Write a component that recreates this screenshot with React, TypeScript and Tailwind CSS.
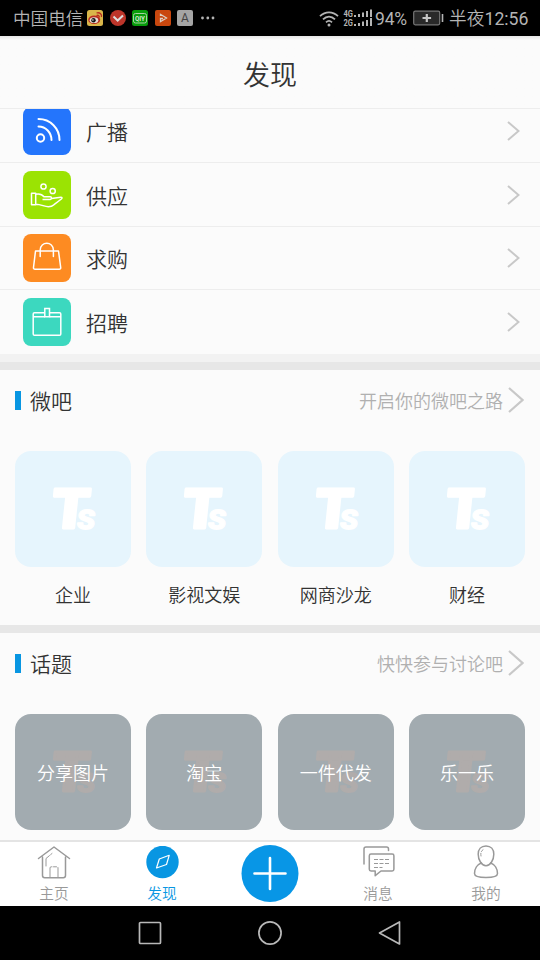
import React from 'react';

const menuItems = [
  { label: '广播', color: 'bg-[#2475fc]', icon: <BroadcastIcon /> },
  { label: '供应', color: 'bg-[#9be303]', icon: <SupplyIcon /> },
  { label: '求购', color: 'bg-[#fd8b22]', icon: <BagIcon /> },
  { label: '招聘', color: 'bg-[#3cd8bf]', icon: <JobIcon /> },
];

const groups = ['企业', '影视文娱', '网商沙龙', '财经'];
const topics = ['分享图片', '淘宝', '一件代发', '乐一乐'];

function BroadcastIcon() {
  return (
    <svg className="size-12" viewBox="0 0 48 48" fill="none" stroke="white" strokeWidth="2">
      <circle cx="17.5" cy="31" r="3.7" />
      <path d="M15.500 19.500c7.300 0 13 6 13 13.500M15.500 12c12 0 21 9.500 21 21" strokeLinecap="round" />
    </svg>
  );
}

function SupplyIcon() {
  return (
    <svg className="size-12" viewBox="0 0 48 48" fill="none" stroke="white" strokeWidth="1.5" strokeLinejoin="round">
      <circle cx="20.500" cy="15.500" r="2.600" />
      <circle cx="29.700" cy="20" r="2.600" />
      <path d="M8.500 22.200h4.200v11.600H8.500zM12.700 23.300c4-.9 6.500.2 8.300 2.500h6.200c1.700.1 1.700 2.400 0 2.700h-7.700M28.500 27.500l9.300-1.300c1.400 0 1.600 1 .6 1.800l-7.400 5.700c-1.500 1.400-3.400 2-5.600 2-4.200 0-6.900-2.400-12.700-2.500" />
    </svg>
  );
}

function BagIcon() {
  return (
    <svg className="size-12" viewBox="0 0 48 48" fill="none" stroke="white" strokeWidth="1.5" strokeLinejoin="round" strokeLinecap="round">
      <path d="M12.500 17h23l2.200 16.500c.1 1.200-.5 1.800-1.500 1.800H12c-1 0-1.600-.6-1.500-1.800zM17.200 22.500V16c0-9 13.200-9 13.200 0v6.500" />
    </svg>
  );
}

function JobIcon() {
  return (
    <svg className="size-12" viewBox="0 0 48 48" fill="none" stroke="white" strokeWidth="1.500">
      <path d="M21.800 14.700H11.500a1.300 1.300 0 0 0-1.300 1.300v20a1.300 1.300 0 0 0 1.300 1.300h25a1.300 1.300 0 0 0 1.300-1.300V16a1.300 1.300 0 0 0-1.300-1.300H26.500M10.500 18.700h11.300M26.500 18.700h11.300" />
      <path d="M21.800 10.500h4.700v8.200h-4.700z" />
    </svg>
  );
}

function TsLogo({ className }: { className: string }) {
  return (
    <svg className={className} viewBox="0 0 116 116" fontFamily="Roboto, 'Liberation Sans', sans-serif" fontWeight="900" strokeLinejoin="round">
      <text transform="translate(41 77.500) skewX(-6) scale(1.080 1)" fontSize="55">
        <tspan x="-5.500" strokeWidth="2.800">T</tspan>
        <tspan x="18.700" y=".5" fontSize="27" strokeWidth="1.300">S</tspan>
      </text>
    </svg>
  );
}

function StatusBar() {
  return (
    <div className="h-9 bg-black text-[#b4b4b4] flex items-center pl-[13px] pr-[11.500px] text-[18px] leading-9">
      <span className="text-[17.600px] pt-[2px]">中国电信</span>
      <div className="flex items-center gap-[6.500px] ml-1">
        <svg className="size-4" viewBox="0 0 16 16">
          <rect width="16" height="16" rx="2.500" fill="#d9b64a" />
          <ellipse cx="7.200" cy="9.800" rx="6" ry="4.300" fill="#b92a20" />
          <ellipse cx="7" cy="10.200" rx="4.300" ry="2.900" fill="#e6ddd2" />
          <circle cx="6.500" cy="10.300" r="2.200" fill="#151515" />
          <circle cx="5.900" cy="10" r=".7" fill="#fff" />
          <path d="M9.500 5.500c2-.8 3.200.5 2.600 2M9.500 3c3.500-1 5.700 1.500 4.900 4" fill="none" stroke="#b92a20" strokeWidth="1.300" />
        </svg>
        <svg className="size-4" viewBox="0 0 16 16">
          <circle cx="8" cy="8" r="8" fill="#bd352a" />
          <path d="M3.500 6.500 7.700 10.500 13 5.500" fill="none" stroke="#ddd" strokeWidth="2" />
        </svg>
        <svg className="size-4" viewBox="0 0 16 16">
          <rect width="16" height="16" rx="2.500" fill="#079b0b" />
          <rect x="1.500" y="3.500" width="13" height="9.500" rx="2" fill="none" stroke="#a8d0a4" strokeWidth="1" />
          <text x="8" y="11" fontSize="7.500" fontWeight="700" fill="#d5e5d2" textAnchor="middle" textLength="10" lengthAdjust="spacingAndGlyphs">QIY</text>
        </svg>
        <svg className="size-4" viewBox="0 0 16 16">
          <rect width="16" height="16" rx="2" fill="#c9470e" />
          <path d="M5.500 6V4.300L11.500 8 5.500 11.700V8.500H8" fill="none" stroke="#ddd0c5" strokeWidth="1.300" />
        </svg>
        <svg className="size-4" viewBox="0 0 16 16">
          <rect width="16" height="16" rx="2" fill="#a5a5a5" />
          <text x="8" y="12.200" fontSize="12" fontWeight="400" fill="#444" textAnchor="middle">A</text>
        </svg>
        <svg className="w-4 h-4" viewBox="0 0 16 16" fill="#b4b4b4">
          <circle cx="2.500" cy="8" r="1.400" />
          <circle cx="7.800" cy="8" r="1.400" />
          <circle cx="13" cy="8" r="1.400" />
        </svg>
      </div>
      <div className="ml-auto flex items-center">
        <svg className="w-5 h-[17px] mr-1" viewBox="0 0 20 17" fill="none" stroke="#b4b4b4" strokeWidth="1.800">
          <path d="M1 6.200c5.300-5 12.700-5 18 0M4 9.300c3.600-3.400 8.400-3.400 12 0M7 12.300c1.800-1.700 4.200-1.700 6 0" />
          <circle cx="10" cy="15" r="1.500" fill="#b4b4b4" stroke="none" />
        </svg>
        <svg className="w-[32px] h-[18px]" viewBox="0 0 32 18" fill="#b4b4b4">
          <text x=".5" y="8" fontSize="9" fontWeight="700" textLength="9.500" lengthAdjust="spacingAndGlyphs">4G</text>
          <text x=".5" y="17" fontSize="9" fontWeight="700" textLength="9.500" lengthAdjust="spacingAndGlyphs">2G</text>
          <path d="M11 6h2v2h-2zM15 5h2v3h-2zM19 3.500h2V8h-2zM23 2h2v6h-2zM27 .5h2V8h-2zM11 15h2v2h-2zM15 14h2v3h-2zM19 12.500h2V17h-2zM23 11h2v6h-2zM27 9h2v8h-2z" />
        </svg>
        <span className="w-[33px] text-[17.500px] font-normal tracking-[-0.2px] pt-[2px]">94%</span>
        <svg className="w-8 h-4 ml-[5px] mr-[4px]" viewBox="0 0 32 16">
          <rect x=".7" y="1.200" width="26" height="13.600" rx="1.500" fill="#292929" stroke="#777" strokeWidth="1.200" />
          <path d="M13.800 4v8M9.500 8h8.600" stroke="#c4c4c4" strokeWidth="2.200" />
          <path d="M29.500 4v8" stroke="#b4b4b4" strokeWidth="1.600" />
        </svg>
        <span className="text-[17.700px] pt-[2px]">半夜<span className="font-normal">12:56</span></span>
      </div>
    </div>
  );
}

function SectionHeader({ title, hint }: { title: string; hint: string }) {
  return (
    <div className="flex items-center h-[60px] pl-[15px] pr-4">
      <div className="w-1.5 h-[19px] bg-[#0896e2]" />
      <h2 className="ml-[9px] pt-[5px] text-[21px] text-[#333]">{title}</h2>
      <span className="ml-auto pt-[2px] text-[18px] text-[#b0b0b0]">{hint}</span>
      <svg className="w-4 h-[26px] ml-[5px]" viewBox="0 0 16 26" fill="none" stroke="#c8c8c8" strokeWidth="2.200">
        <path d="M1 1 14.500 13 1 25" />
      </svg>
    </div>
  );
}

function TabBar() {
  return (
    <div className="h-[66px] bg-white border-t-2 border-[#e4e4e4] grid grid-cols-5 text-[14.700px] leading-5 text-[#999]">
      <div className="flex flex-col items-center pt-1">
        <svg className="w-[34px] h-[33px]" viewBox="0 0 34 33" fill="none" stroke="#999" strokeWidth="1.500" strokeLinecap="round" strokeLinejoin="round">
          <path d="M1.500 12.500 17 1l15.500 11.500M5.500 11v18.500c0 1.500.7 2.200 2.200 2.200h18.600c1.500 0 2.200-.7 2.200-2.200V11" />
          <path d="M13 31.500V22c0-.8.400-1.200 1.200-1.200h5.600c.8 0 1.200.4 1.200 1.200v9.500M9 20v-7.500L15 7.500" strokeWidth="1" strokeDasharray="12 1.500 3 1.500" />
        </svg>
        <span className="mt-[5px]">主页</span>
      </div>
      <div className="flex flex-col items-center pt-1 text-[#0896e2]">
        <svg className="size-[33px]" viewBox="0 0 33 33" fill="none">
          <circle cx="16.500" cy="16" r="16.200" fill="#0896e2" />
          <path d="M23.200 9.300 20.500 18.500 10.500 22 13.300 13z" stroke="white" strokeWidth="1.200" strokeLinejoin="round" />
        </svg>
        <span className="mt-[5px]">发现</span>
      </div>
      <div className="flex justify-center pt-[3px]">
        <svg className="size-[58px]" viewBox="0 0 58 58">
          <circle cx="29" cy="28.500" r="28.500" fill="#0896e6" />
          <path d="M13.500 28.500h31M29 13v31" stroke="white" strokeWidth="2.600" strokeLinecap="round" />
        </svg>
      </div>
      <div className="flex flex-col items-center pt-1">
        <svg className="w-[33px] h-[33px]" viewBox="0 0 33 33" fill="none" stroke="#999" strokeWidth="1.500" strokeLinejoin="round" strokeLinecap="round">
          <path d="M2 18V3c0-1.500.5-2 2-2h20.500c1.500 0 2 .5 2 2v1.500" />
          <path d="M9 8h21.200c1.200 0 1.700.5 1.700 1.700v13.600c0 1.200-.5 1.700-1.700 1.700H19l-5.800 4.700V25H9c-1.200 0-1.700-.5-1.700-1.700V9.700C7.300 8.500 7.800 8 9 8z" />
          <path d="M12 13.500h15M12 17.500h15M12 21.500h8.500" strokeWidth="1.200" strokeDasharray="4 1.500" strokeLinecap="butt" />
        </svg>
        <span className="mt-[5px]">消息</span>
      </div>
      <div className="flex flex-col items-center pt-[3px]">
        <svg className="w-[26px] h-[34px]" viewBox="0 0 26 34" fill="none" stroke="#999" strokeWidth="1.500" strokeLinecap="round">
          <path d="M13 1C8 1 5.200 4.500 5.200 9.200c0 5.500 3.300 11.500 7.800 11.500s7.800-6 7.800-11.500C20.800 4.500 18 1 13 1z" />
          <path d="M8.300 18C4 19.500 1.500 24 1.500 28.500c0 3 4 4 11.500 4s11.500-1 11.500-4c0-4.500-2.500-9-6.800-10.500" />
          <path d="M8 11c-.7-3.500.5-6 3.500-7" strokeWidth="1" strokeDasharray="2.500 2" />
        </svg>
        <span className="mt-[5px]">我的</span>
      </div>
    </div>
  );
}

function App() {
  return (
    <div className="w-[540px] h-[960px] overflow-hidden flex flex-col bg-[#fbfbfb] font-[350] font-[Roboto,'Noto_Sans_CJK_SC',sans-serif]">
      <StatusBar />
      <header className="h-[73px] shrink-0 flex items-center justify-center border-b border-[#ededed] bg-linear-to-b from-[#e6e6e6] to-[#fbfbfb] to-[4px] pt-[9px] text-[27px] text-[#333]">
        发现
      </header>

      {/* Scrolled list, the first row is cut by the header */}
      <div className="h-[245px] shrink-0 overflow-hidden flex flex-col justify-end">
        {menuItems.map((item) => (
          <div key={item.label} className="h-[63.700px] shrink-0 flex items-center border-b border-[#ededed] last:border-transparent pl-[23px] pr-5 pt-px">
            <div className={`size-12 rounded-lg ${item.color}`}>{item.icon}</div>
            <span className="ml-[15px] pt-[5px] text-[21px] text-[#333]">{item.label}</span>
            <svg className="ml-auto w-[13px] h-5" viewBox="0 0 13 20" fill="none" stroke="#c8c8c8" strokeWidth="2">
              <path d="M1 1 11.500 10 1 19" />
            </svg>
          </div>
        ))}
      </div>
      <div className="h-2 shrink-0 bg-[#f2f2f2]" />
      <div className="h-2 shrink-0 bg-[#e7e7e7]" />

      <section className="h-[255px] shrink-0">
        <SectionHeader title="微吧" hint="开启你的微吧之路" />
        <div className="grid grid-cols-4 gap-[15.600px] px-[15px] pt-[21px]">
          {groups.map((name) => (
            <div key={name} className="flex flex-col items-center">
              <div className="w-full aspect-square rounded-2xl bg-[#e6f5fd]">
                <TsLogo className="size-full fill-white stroke-white" />
              </div>
              <span className="mt-[15.500px] text-[18px] leading-7 text-[#333]">{name}</span>
            </div>
          ))}
        </div>
      </section>
      <div className="h-2 shrink-0 bg-[#e7e7e7]" />

      <section className="h-[207px] shrink-0">
        <SectionHeader title="话题" hint="快快参与讨论吧" />
        <div className="grid grid-cols-4 gap-[15.600px] px-[15px] pt-[21px]">
          {topics.map((name) => (
            <div key={name} className="relative aspect-square rounded-2xl bg-[#a2abb0]">
              <TsLogo className="size-full fill-[#b0acab] stroke-[#b0acab]" />
              <span className="absolute inset-0 flex items-center justify-center pt-[3px] text-[18px] text-white">{name}</span>
            </div>
          ))}
        </div>
      </section>

      <TabBar />

      <div className="h-[54px] shrink-0 bg-black flex items-center justify-center gap-24">
        <svg className="size-6" viewBox="0 0 24 24" fill="none" stroke="#b8b8b8" strokeWidth="1.700">
          <rect x="1.500" y="1.500" width="21" height="21" rx="1" />
        </svg>
        <svg className="size-6" viewBox="0 0 24 24" fill="none" stroke="#b8b8b8" strokeWidth="1.700">
          <circle cx="12" cy="12" r="11.100" />
        </svg>
        <svg className="size-6" viewBox="0 0 24 24" fill="none" stroke="#b8b8b8" strokeWidth="1.700" strokeLinejoin="round">
          <path d="M21.500 1v22L1.500 12z" />
        </svg>
      </div>
    </div>
  );
}

export default App;
